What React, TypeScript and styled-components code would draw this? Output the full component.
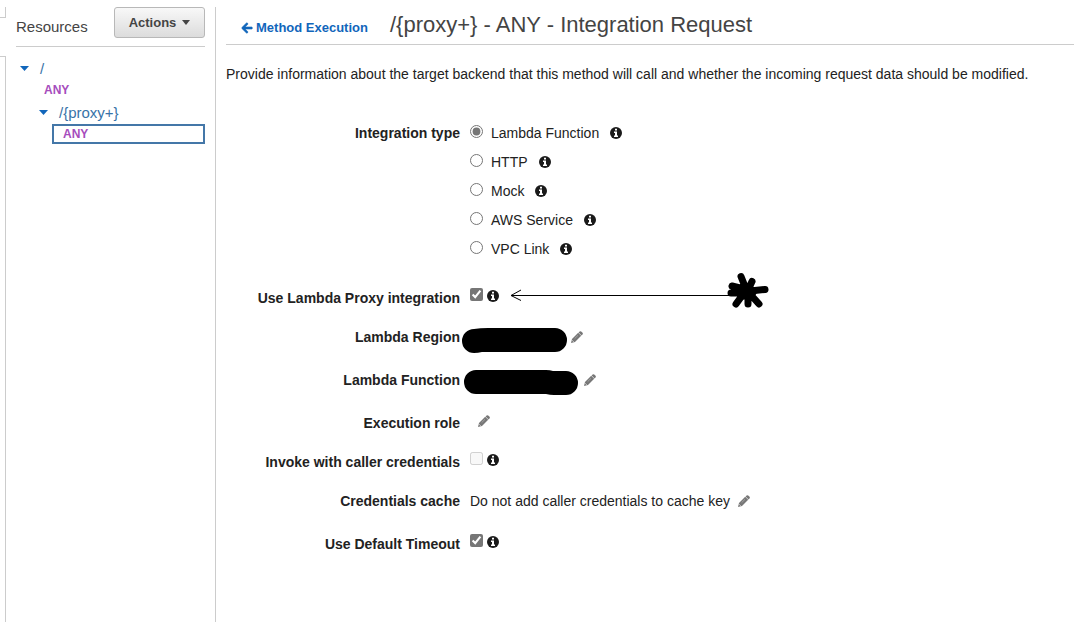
import React from "react";
import styled, { createGlobalStyle } from "styled-components";
import { FaArrowLeft } from "react-icons/fa";

const GlobalStyle = createGlobalStyle`
  *, *::before, *::after { box-sizing: border-box; }
  body {
    margin: 0;
    background: #fff;
    color: #222;
    font: 14px/20px "Liberation Sans", Arial, sans-serif;
  }
`;

const Page = styled.div`
  display: flex;
  min-height: 100vh;
  padding-top: 7px;
`;

const Rail = styled.div`
  flex: 0 0 6px;
  display: flex;
  flex-direction: column;
  gap: 38px;
`;

const RailTab = styled.div`
  height: 11px;
  border: solid #ccc;
  border-width: 0 1px 1px 0;
`;

const RailPanel = styled.div`
  flex: 1;
  border: solid #ccc;
  border-width: 1px 1px 0 0;
`;

const Sidebar = styled.aside`
  flex: 0 0 210px;
  padding: 0 10px;
  border-right: 1px solid #ccc;
`;

const SidebarHeader = styled.header`
  display: flex;
  justify-content: space-between;
  height: 40px;
  border-bottom: 1px solid #ccc;
`;

const SidebarTitle = styled.h2`
  margin: 0;
  font-size: 15px;
  font-weight: 400;
  line-height: 40px;
  color: #444;
`;

const ActionsButton = styled.button`
  display: flex;
  align-items: center;
  justify-content: center;
  gap: 6px;
  width: 91px;
  height: 31px;
  padding: 0;
  border: 1px solid #b8b8b8;
  border-radius: 3px;
  background: linear-gradient(#f8f8f8, #dcdcdc);
  color: #444;
  font: 700 13px/20px "Liberation Sans", Arial, sans-serif;
`;

const Tree = styled.nav`
  display: flex;
  flex-direction: column;
  padding-top: 10px;
`;

const ResourceRow = styled.div<{ $level: number }>`
  display: flex;
  align-items: center;
  gap: 11px;
  height: 23px;
  padding-left: ${(p) => 4 + p.$level * 19}px;
`;

const ResourceLink = styled.a`
  color: #3873a8;
  font-size: 15px;
  text-decoration: none;
`;

const MethodLink = styled.a<{ $level: number; $selected?: boolean }>`
  display: block;
  margin-left: ${(p) => 17 + p.$level * 19}px;
  padding-left: 9px;
  border: 2px solid ${(p) => (p.$selected ? "#4477a8" : "transparent")};
  color: #a64dbd;
  font-size: 12px;
  font-weight: 700;
  line-height: 16px;
  text-decoration: none;
`;

const Branch = styled.div`
  display: flex;
  flex-direction: column;
  padding-bottom: 1px;
`;

const Main = styled.main`
  flex: 1;
  min-width: 0;
  padding-left: 10px;
`;

const MainHeader = styled.header`
  display: flex;
  align-items: center;
  gap: 22px;
  height: 38px;
  padding-left: 15px;
  border-bottom: 1px solid #ccc;
`;

const BackLink = styled.a`
  display: flex;
  align-items: center;
  gap: 3px;
  padding-top: 4px;
  color: #1166bb;
  font-size: 13px;
  font-weight: 700;
  text-decoration: none;
`;

const BackArrow = styled(FaArrowLeft)`
  width: 12px;
  height: 12px;
  stroke: currentColor;
  stroke-width: 30px;
`;

const Title = styled.h1`
  margin: 0;
  color: #444;
  font-size: 22px;
  font-weight: 400;
  line-height: 36px;
  align-self: flex-start;
`;

const Description = styled.p`
  margin: 19px 0 39px;
`;

const Form = styled.form`
  display: flex;
  flex-direction: column;
`;

const Row = styled.div<{ $gap: number }>`
  display: grid;
  grid-template-columns: 234px 1fr;
  column-gap: 10px;
  min-height: 20px;
  margin-bottom: ${(p) => p.$gap}px;
`;

const RowLabel = styled.label`
  font-weight: 700;
  text-align: right;
`;

const Control = styled.div`
  position: relative;
  display: flex;
  align-items: flex-start;
  height: 20px;
`;

const OptionList = styled.div`
  display: flex;
  flex-direction: column;
  gap: 9px;
`;

const Option = styled.div`
  display: flex;
  align-items: flex-start;
  height: 20px;
`;

const OptionLabel = styled.label`
  margin: 0 11px 0 8px;
`;

const Radio = styled.input.attrs({ type: "radio" })`
  width: 13px;
  height: 13px;
  margin: 2px 0 0;
  accent-color: #767676;
`;

const Checkbox = styled.input.attrs({ type: "checkbox" })`
  width: 13px;
  height: 13px;
  margin: 0 4px 0 0;
  accent-color: #767676;
`;

const InfoSvg = styled.svg<{ $top: number }>`
  flex: none;
  width: 12px;
  height: 12px;
  margin-top: ${(p) => p.$top}px;
`;

const EditButton = styled.button<{ $gap: number; $top: number }>`
  display: flex;
  margin: ${(p) => p.$top}px 0 0 ${(p) => p.$gap}px;
  padding: 0;
  border: 0;
  background: none;
  color: #777;
`;

const Redaction = styled.svg<{ $shift: number }>`
  flex: none;
  display: block;
  margin-left: ${(p) => p.$shift}px;
  overflow: visible;
`;

const Annotation = styled.svg`
  position: absolute;
  top: -16px;
  left: 40px;
  pointer-events: none;
`;

const Caret = ({ color, width }: { color: string; width: number }) => (
  <svg width={width} height="5" viewBox="0 0 10 5" preserveAspectRatio="none" aria-hidden="true">
    <path d="M0 0H10L5 5Z" fill={color} />
  </svg>
);

const InfoIcon = ({ top }: { top: number }) => (
  <InfoSvg $top={top} viewBox="0 0 12 12" aria-hidden="true">
    <circle cx="6" cy="6" r="6" fill="#1a1a1a" />
    <path d="M5 1.8H7V3.6H5ZM4 4.6H7V8.4H8V10H4V8.4H5V6H4Z" fill="#fff" />
  </InfoSvg>
);

const Edit = ({ name, gap, top = 4 }: { name: string; gap: number; top?: number }) => (
  <EditButton type="button" aria-label={`Edit ${name}`} $gap={gap} $top={top}>
    <svg width="12" height="12" viewBox="0 0 12 12" aria-hidden="true">
      <path
        d="M8.6.5Q9.4-.2 10.2.5L11.6 1.8Q12.2 2.6 11.5 3.4L10.6 4.4 7.6 1.4ZM7.2 1.8 10.2 4.8 4 11 0 12 1 8Z"
        fill="currentColor"
      />
      <path d="M3.6 7.7 7 4.3" stroke="#ccc" strokeWidth=".5" />
      <path d="M1.3 9.4 2.6 10.7" stroke="#fff" strokeWidth=".8" />
    </svg>
  </EditButton>
);

const integrationTypes = ["Lambda Function", "HTTP", "Mock", "AWS Service", "VPC Link"];

export default function App() {
  return (
    <>
      <GlobalStyle />
      <Page>
        <Rail>
          <RailTab />
          <RailPanel />
        </Rail>
        <Sidebar>
          <SidebarHeader>
            <SidebarTitle>Resources</SidebarTitle>
            <ActionsButton type="button">
              Actions
              <Caret color="#444" width={8} />
            </ActionsButton>
          </SidebarHeader>
          <Tree aria-label="Resources">
            <Branch>
              <ResourceRow $level={0}>
                <Caret color="#1166bb" width={9} />
                <ResourceLink href="#root">/</ResourceLink>
              </ResourceRow>
              <MethodLink href="#root-any" $level={0}>ANY</MethodLink>
            </Branch>
            <Branch>
              <ResourceRow $level={1}>
                <Caret color="#1166bb" width={9} />
                <ResourceLink href="#proxy">/&#123;proxy+&#125;</ResourceLink>
              </ResourceRow>
              <MethodLink href="#proxy-any" $level={1} $selected aria-current="page">
                ANY
              </MethodLink>
            </Branch>
          </Tree>
        </Sidebar>
        <Main>
          <MainHeader>
            <BackLink href="#method-execution">
              <BackArrow aria-hidden="true" />
              Method Execution
            </BackLink>
            <Title>/&#123;proxy+&#125; - ANY - Integration Request</Title>
          </MainHeader>
          <Description>
            Provide information about the target backend that this method will call and whether the
            incoming request data should be modified.
          </Description>
          <Form>
            <Row $gap={29} role="radiogroup" aria-labelledby="type-label">
              <RowLabel as="span" id="type-label">Integration type</RowLabel>
              <OptionList>
                {integrationTypes.map((name, i) => (
                  <Option key={name}>
                    <Radio id={`type-${i}`} name="type" defaultChecked={i === 0} />
                    <OptionLabel htmlFor={`type-${i}`}>{name}</OptionLabel>
                    <InfoIcon top={4} />
                  </Option>
                ))}
              </OptionList>
            </Row>
            <Row $gap={19}>
              <RowLabel htmlFor="proxy">Use Lambda Proxy integration</RowLabel>
              <Control>
                <Checkbox id="proxy" defaultChecked />
                <InfoIcon top={2} />
                <Annotation width="260" height="38" viewBox="0 0 260 38" fill="none" stroke="#000" aria-hidden="true">
                  <path d="M1 23.5H220M11 18 1 23.5 11 28.5" />
                  <path
                    d="M231 4.5 236 17M242 9.5 238 18M255 17.5 240 19M249 32 240 22M238 32V20M226 32 234 21M222 14 234 17M221 21H234"
                    strokeWidth="7"
                    strokeLinecap="round"
                  />
                  <path d="M222 14 234 13 243 15 248 18 245 23 241 27 233 27 229 22 221 21Z" fill="#000" strokeLinejoin="round" />
                </Annotation>
              </Control>
            </Row>
            <Row $gap={23}>
              <RowLabel as="span">Lambda Region</RowLabel>
              <Control>
                <Redaction $shift={-8} width="105" height="26" viewBox="0 0 105 26" aria-hidden="true">
                  <path d="M12 2Q18 1 26 1H93A12 12 0 0 1 93 25H20Q16 26 12 26A12 12 0 0 1 12 2Z" />
                </Redaction>
                <Edit name="Lambda Region" gap={4} />
              </Control>
            </Row>
            <Row $gap={23}>
              <RowLabel as="span">Lambda Function</RowLabel>
              <Control>
                <Redaction $shift={-6} width="115" height="26" viewBox="0 0 115 26" aria-hidden="true">
                  <path d="M12 0H82Q86 0 89 1H102A12 12 0 0 1 102 25H90Q86 25 82 24H12A12 12 0 0 1 12 0Z" />
                </Redaction>
                <Edit name="Lambda Function" gap={5} />
              </Control>
            </Row>
            <Row $gap={19}>
              <RowLabel as="span">Execution role</RowLabel>
              <Control>
                <Edit name="Execution role" gap={8} top={2} />
              </Control>
            </Row>
            <Row $gap={19}>
              <RowLabel htmlFor="credentials">Invoke with caller credentials</RowLabel>
              <Control>
                <Checkbox id="credentials" disabled />
                <InfoIcon top={2} />
              </Control>
            </Row>
            <Row $gap={23}>
              <RowLabel as="span">Credentials cache</RowLabel>
              <Control>
                Do not add caller credentials to cache key
                <Edit name="Credentials cache" gap={8} />
              </Control>
            </Row>
            <Row $gap={19}>
              <RowLabel htmlFor="timeout">Use Default Timeout</RowLabel>
              <Control>
                <Checkbox id="timeout" defaultChecked />
                <InfoIcon top={2} />
              </Control>
            </Row>
          </Form>
        </Main>
      </Page>
    </>
  );
}
